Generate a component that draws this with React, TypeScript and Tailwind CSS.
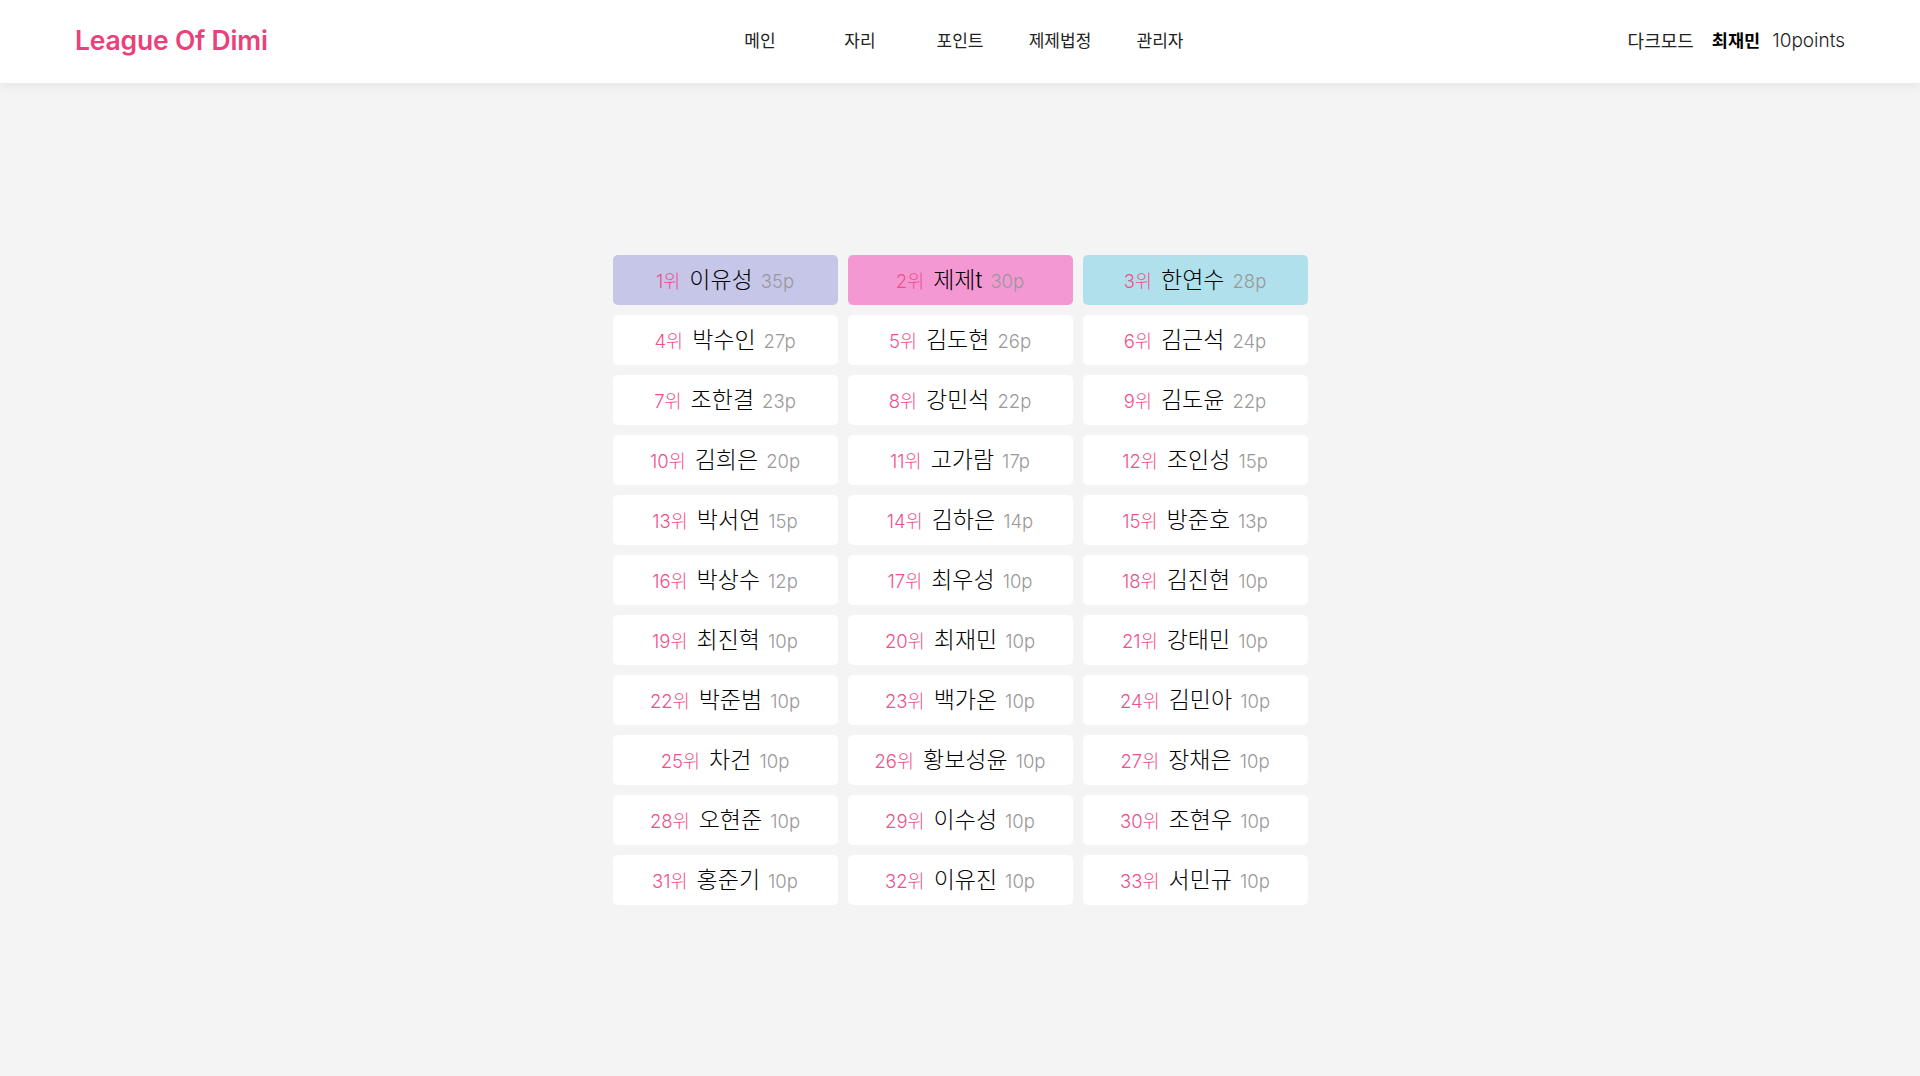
import React from "react";

const data: [string, number][] = [
  ["이유성", 35], ["제제t", 30], ["한연수", 28],
  ["박수인", 27], ["김도현", 26], ["김근석", 24],
  ["조한결", 23], ["강민석", 22], ["김도윤", 22],
  ["김희은", 20], ["고가람", 17], ["조인성", 15],
  ["박서연", 15], ["김하은", 14], ["방준호", 13],
  ["박상수", 12], ["최우성", 10], ["김진현", 10],
  ["최진혁", 10], ["최재민", 10], ["강태민", 10],
  ["박준범", 10], ["백가온", 10], ["김민아", 10],
  ["차건", 10], ["황보성윤", 10], ["장채은", 10],
  ["오현준", 10], ["이수성", 10], ["조현우", 10],
  ["홍준기", 10], ["이유진", 10], ["서민규", 10],
];

const bgs = ["bg-[#c5c6e8]", "bg-[#f498d4]", "bg-[#b0e0ec]"];

export default function App() {
  return (
    <div
      className="min-h-[1076px] bg-[#f4f4f4]"
      style={{ fontFamily: '"Inter", "Noto Sans CJK KR", sans-serif' }}
    >
      <header className="h-[83px] bg-white shadow-[0_2px_10px_rgba(0,0,0,0.08)] grid grid-cols-[1fr_auto_1fr] items-center px-[75px]">
        <div className="text-[26.5px] font-semibold text-[#ec3f7c] tracking-[-0.2px] -mt-[1px]">League Of Dimi</div>
        <nav className="flex text-[17px] text-[#222]">
          {["메인", "자리", "포인트", "제제법정", "관리자"].map((t) => (
            <div key={t} className="w-[100px] text-center">{t}</div>
          ))}
        </nav>
        <div className="flex justify-end items-center text-[17.5px] text-[#222]">
          <span className="text-[18px]">다크모드</span>
          <span className="ml-[18px] font-bold text-black">최재민</span>
          <span className="ml-[12px] font-light text-[19px]">10points</span>
        </div>
      </header>
      <main className="flex justify-center pt-[172px]">
        <div className="grid grid-cols-[225px_225px_225px] gap-[10px]">
          {data.map(([name, p], i) => (
            <div
              key={i}
              className={`h-[50px] rounded-[5px] flex items-center justify-center ${i < 3 ? bgs[i] : "bg-white"}`}
            >
              <div className="flex items-baseline font-light">
                <span className="text-[18.5px] text-[#f0508a]">{i + 1}위</span>
                <span className="ml-[9px] text-[23px] text-black">{name}</span>
                <span className="ml-[8px] text-[18.5px] text-[#999]">{p}p</span>
              </div>
            </div>
          ))}
        </div>
      </main>
    </div>
  );
}
